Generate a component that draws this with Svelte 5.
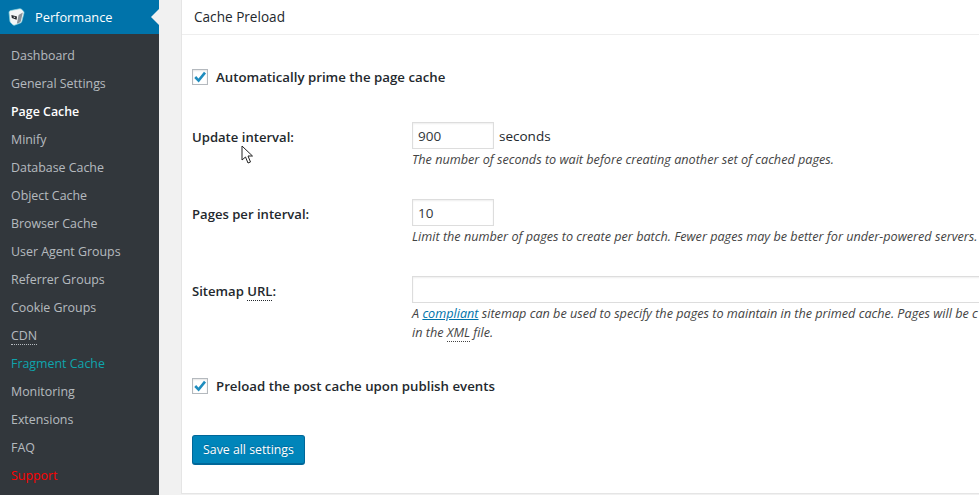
<script lang="ts">
	const menu = [
		{ label: 'Dashboard' },
		{ label: 'General Settings' },
		{ label: 'Page Cache', kind: 'current' },
		{ label: 'Minify' },
		{ label: 'Database Cache' },
		{ label: 'Object Cache' },
		{ label: 'Browser Cache' },
		{ label: 'User Agent Groups' },
		{ label: 'Referrer Groups' },
		{ label: 'Cookie Groups' },
		{ label: 'CDN', abbr: true },
		{ label: 'Fragment Cache', kind: 'fragment' },
		{ label: 'Monitoring' },
		{ label: 'Extensions' },
		{ label: 'FAQ' },
		{ label: 'Support', kind: 'support' }
	];
</script>

{#snippet check()}
	<span class="check">
		<svg viewBox="0 0 14 14" width="14" height="14">
			<path d="M2.2 7 L5.6 10.6 L12 2.6" fill="none" stroke="#1e8cbe" stroke-width="2.6" />
		</svg>
	</span>
{/snippet}

<div class="page">
	<nav class="sidebar">
		<div class="head">
			<svg class="logo" viewBox="0 0 20 20" width="20" height="20">
				<path d="M3 5.5 Q3 4 4.5 3.6 L13.5 1.8 Q15 1.6 16 2.6 L17.6 4.4 Q18.2 5 18 6 L15.8 14.4 Q15.4 15.6 14.4 16 L8.6 18.2 Q7.6 18.5 6.8 17.8 L4.6 15.6 Q4 15 3.9 14 Z" fill="#f4f6f7" stroke="#7fd0dc" stroke-width="0.7" />
				<path d="M12.6 8 L16.8 5.6 L14.8 14.2 Q14.5 15.2 13.6 15.6 L10.8 16.8 Z" fill="#8b9299" />
				<path d="M5.4 8 L11 9.6 L10.6 12.8 L5.8 11 Z" fill="#23282d" />
				<path d="M7.6 9.6 L9.2 10 L9 11 L7.6 10.6 Z" fill="#f4f6f7" />
			</svg>
			<span>Performance</span>
		</div>
		<ul>
			{#each menu as item}
				<li class={item.kind}>
					{#if item.abbr}<span class="abbr">{item.label}</span>{:else}{item.label}{/if}
				</li>
			{/each}
		</ul>
	</nav>

	<main class="card">
		<h3>Cache Preload</h3>
		<div class="body">
			<label class="toggle first">
				{@render check()}
				<span>Automatically prime the page cache</span>
			</label>

			<div class="row">
				<div class="name">Update interval:</div>
				<div class="field">
					<div class="inline">
						<span class="input short">900</span>
						<span class="unit">seconds</span>
					</div>
					<p>The number of seconds to wait before creating another set of cached pages.</p>
				</div>
			</div>

			<div class="row">
				<div class="name">Pages per interval:</div>
				<div class="field">
					<div class="inline"><span class="input short">10</span></div>
					<p>Limit the number of pages to create per batch. Fewer pages may be better for under-powered servers.</p>
				</div>
			</div>

			<div class="row">
				<div class="name">Sitemap <span class="abbr">URL</span>:</div>
				<div class="field">
					<div class="inline"><span class="input wide"></span></div>
					<p>A <a href="#top">compliant</a> sitemap can be used to specify the pages to maintain in the primed cache. Pages will be c<br />in the <span class="abbr">XML</span> file.</p>
				</div>
			</div>

			<label class="toggle second">
				{@render check()}
				<span>Preload the post cache upon publish events</span>
			</label>

			<button type="button">Save all settings</button>
		</div>
	</main>

	<svg class="cursor" viewBox="0 0 13 20" width="13" height="20">
		<path d="M1 1 L1 15 L4.5 12 L7 18 L9.5 17 L7 11 L11.5 11 Z" fill="#fff" stroke="#222" stroke-width="1" />
	</svg>
</div>

<style>
	:global(body) {
		margin: 0;
		overflow: hidden;
		background: #f1f1f1;
	}

	.page {
		position: relative;
		display: flex;
		width: 979px;
		height: 495px;
		overflow: hidden;
		background: #f1f1f1;
		font-family: "Open Sans", sans-serif;
		font-size: 12.4px;
		color: #444;
	}

	.sidebar {
		flex: none;
		width: 159px;
		background: #32373c;
	}

	.head {
		display: flex;
		align-items: center;
		height: 34px;
		padding-left: 6px;
		gap: 9px;
		background: #0073aa;
		color: #fff;
		font-size: 12.8px;
		position: relative;
		box-sizing: border-box;
	}

	.head::after {
		content: '';
		position: absolute;
		right: 0;
		top: 9px;
		border: 8px solid transparent;
		border-right-color: #f1f1f1;
		border-left: 0;
	}

	.logo {
		flex: none;
	}

	ul {
		list-style: none;
		margin: 0;
		padding: 8px 0 0;
	}

	li {
		height: 28px;
		line-height: 28px;
		padding-left: 11px;
		color: rgba(240, 245, 250, 0.7);
	}

	li.current {
		color: #fff;
		font-weight: 600;
	}

	li.fragment {
		color: #0ea5ad;
	}

	li.support {
		color: #f00;
	}

	.abbr {
		border-bottom: 1px dotted currentColor;
	}

	.card {
		flex: none;
		width: 800px;
		height: 494px;
		margin-left: 22px;
		background: #fff;
		border-left: 1px solid #e5e5e5;
		border-bottom: 1px solid #e5e5e5;
		box-sizing: border-box;
		color: #23282d;
	}

	h3 {
		margin: 0;
		height: 35px;
		line-height: 34px;
		padding-left: 12px;
		box-sizing: border-box;
		border-bottom: 1px solid #eee;
		font-size: 13.6px;
		font-weight: 400;
	}

	.body {
		padding: 0 0 0 10px;
	}

	.toggle {
		display: flex;
		align-items: center;
		gap: 8px;
		height: 16px;
		font-weight: 600;
		font-size: 13.25px;
		white-space: nowrap;
	}

	.toggle.first {
		margin-top: 34px;
		margin-bottom: 37px;
	}

	.toggle.second {
		margin-top: 25px;
		margin-bottom: 41px;
	}

	.check {
		flex: none;
		display: flex;
		align-items: center;
		justify-content: center;
		width: 16px;
		height: 16px;
		box-sizing: border-box;
		background: #fff;
		border: 1px solid #b4b9be;
		box-shadow: inset 0 1px 2px rgba(0, 0, 0, 0.1);
	}

	.row {
		display: grid;
		grid-template-columns: 220px 1fr;
		height: 77px;
	}

	.name {
		padding-top: 6px;
		font-weight: 600;
		font-size: 13.1px;
	}

	.inline {
		display: flex;
		align-items: center;
		gap: 5px;
		height: 27px;
		font-size: 13.5px;
	}

	.input {
		box-sizing: border-box;
		height: 27px;
		line-height: 27px;
		padding-left: 5px;
		background: #fff;
		border: 1px solid #ddd;
		box-shadow: inset 0 1px 2px rgba(0, 0, 0, 0.07);
		color: #32373c;
	}

	.short {
		width: 82px;
	}

	.wide {
		width: 700px;
	}

	.field p {
		margin: 0;
		padding-top: 1px;
		font-size: 12.65px;
		font-style: italic;
		line-height: 19px;
		white-space: nowrap;
		color: #444;
	}

	.field a {
		color: #0073aa;
	}

	button {
		display: block;
		width: 113px;
		height: 30px;
		padding: 0;
		background: #0085ba;
		border: 1px solid #006799;
		border-bottom-width: 2px;
		border-radius: 3px;
		color: #fff;
		font-family: inherit;
		font-size: 12.3px;
		text-shadow: 0 -1px 1px #006799;
	}

	.cursor {
		position: absolute;
		left: 241px;
		top: 145px;
	}
</style>
